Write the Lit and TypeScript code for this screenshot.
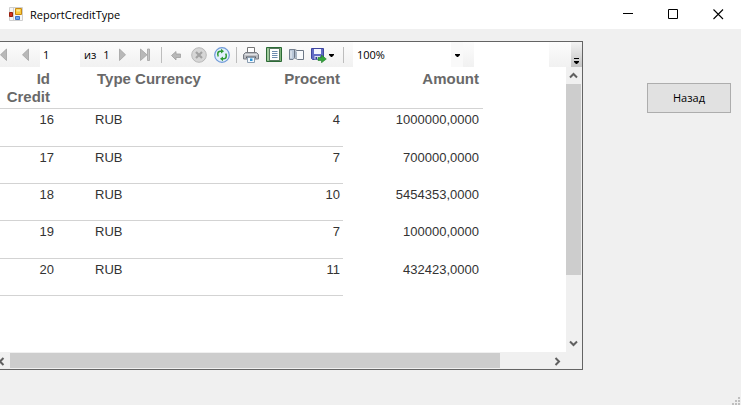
import { LitElement, html, css, svg } from "lit";
import { customElement, state } from "lit/decorators.js";

interface CreditRow {
  id: number;
  currency: string;
  procent: number;
  amount: string;
}

const rows: CreditRow[] = [
  { id: 16, currency: "RUB", procent: 4, amount: "1000000,0000" },
  { id: 17, currency: "RUB", procent: 7, amount: "700000,0000" },
  { id: 18, currency: "RUB", procent: 10, amount: "5454353,0000" },
  { id: 19, currency: "RUB", procent: 7, amount: "100000,0000" },
  { id: 20, currency: "RUB", procent: 11, amount: "432423,0000" },
];

const icon = (body: unknown, width = 16) =>
  html`<svg width=${width} height="16" viewBox="0 0 ${width} 16" aria-hidden="true">${body}</svg>`;

const greyFill = "#b8b8b8";
const greyEdge = "#a2a2a2";

const icons = {
  first: svg`<path d="M12.5 2v11.500L6.500 7.800z" fill=${greyFill} stroke=${greyEdge} stroke-width=".8"/><path d="M3 2h3v12H3z" fill=${greyFill}/>`,
  prev: svg`<path d="M11.5 2v11.500L5.500 7.800z" fill=${greyFill} stroke=${greyEdge} stroke-width=".8"/>`,
  next: svg`<path d="M3.500 2v11.500L9.500 7.800z" fill=${greyFill} stroke=${greyEdge} stroke-width=".8"/>`,
  last: svg`<path d="M1.500 2v11.500L8 7.800z" fill=${greyFill} stroke=${greyEdge} stroke-width=".8"/><path d="M8.500 2h2v11.500h-2z" fill="#c4c4c4" stroke=${greyEdge} stroke-width=".8"/>`,
  back: svg`<path d="M3.500 8.500 8 4.500v2.500h4.500v3.500H8v2.500z" fill="#b8b8b8" stroke="#a0a0a0" stroke-width=".8"/>`,
  stop: svg`<circle cx="8" cy="8" r="7.300" fill="#d6d6d6" stroke="#b8b8b8"/><path d="m5 5 6 6m0-6-6 6" stroke="#a2a2a2" stroke-width="2.200"/>`,
  refresh: svg`<circle cx="8" cy="8" r="7.300" fill="#e2effc" stroke="#6f9ad8" stroke-width="1.200"/><path d="M3.800 8.500V6.500q0-2.300 2.700-2.300h1" fill="none" stroke="#2d9a35" stroke-width="1.500"/><path d="M7 1.800v4.800l3-2.400z" fill="#2d9a35"/><path d="M3 8h2v1.500H3zM11 6.500h2V8h-2z" fill="#63b866"/><path d="M12.200 7.500v2q0 2.300-2.700 2.300h-1" fill="none" stroke="#2d9a35" stroke-width="1.500"/><path d="M9 9.400v4.800l-3-2.400z" fill="#2d9a35"/>`,
  print: svg`<path d="M4.500.500h7v6h-7z" fill="#fff" stroke="#777"/><path d="M2.500 5.500h11l2 2v4.500H.500V7.500z" fill="#b9bcc1" stroke="#777b82"/><path d="M2 7h12v1.200H2z" fill="#e0e2e5"/><path d="M3 9.500h10V11H3z" fill="#5a5e64"/><path d="M4.500 10.500h7v5h-7z" fill="#f4faff" stroke="#8b9db0"/><path d="M7 11.500h2.500V14H7z" fill="#2a94d8"/>`,
  layout: svg`<path d="M.500.500h15v14H.500z" fill="#7fb47c" stroke="#2c6a36"/><path d="M2 1.500v12" stroke="#c3e2be"/><path d="M3.500 1.500h10v12h-10z" fill="#fff" stroke="#3b6145" stroke-width=".8"/><path d="M6 4.500h5.500M6 6.500h5.500M6 8.500h5.500M6 10.500h5.500" stroke="#6c8bb0"/>`,
  setup: svg`<path d="M.500 2.500h5v8.500l-1.500 1.500H.500z" fill="#b9c7d8" stroke="#74808f"/><path d="M2 4v7" stroke="#eef3f8"/><path d="M5.500 2.500 8 3.500h6.500v9H8.500l-3-2z" fill="#f8fafc" stroke="#6c7785"/><path d="M6 3.200 8 5v6.500L6 10.200z" fill="#a8b5c4"/>`,
  save: svg`<path d="M.500 1.500h12v11h-11l-1-1z" fill="#626bc6" stroke="#3d449f"/><path d="M3 2h7v5H3z" fill="#f3f5ff"/><path d="M3.500 9H9v3.500H3.500z" fill="#d9def2"/><path d="M4.500 10H6v2.500H4.500z" fill="#343a93"/><path d="M7 10.500h3.500V8l4.800 4-4.800 3.800V13.500H7z" fill="#35a53a" stroke="#1c7a28" stroke-width=".6"/>`,
};

@customElement("report-toolbar")
export class ReportToolbar extends LitElement {
  static styles = css`
    :host {
      display: flex;
      align-items: center;
      height: 25px;
      overflow: hidden;
      background: linear-gradient(#fcfcfc, #f1f1f1);
      font: 11px/16px "Open Sans", "Noto Sans", sans-serif;
      color: #000;
    }
    button {
      display: flex;
      flex: none;
      align-items: center;
      justify-content: center;
      width: 23px;
      height: 23px;
      padding: 0;
      border: 0;
      background: none;
    }
    .first {
      margin-left: -10px;
    }
    .save {
      width: 32px;
      gap: 2px;
      justify-content: flex-start;
      padding-left: 3px;
    }
    svg {
      flex: none;
    }
    input,
    select {
      box-sizing: border-box;
      height: 25px;
      border: 0;
      padding: 0 4px;
      margin: 0;
      background: #fff;
      color: inherit;
      font: inherit;
      border-radius: 0;
      appearance: none;
    }
    .page {
      width: 40px;
      margin-left: 4px;
      padding: 0 3px;
    }
    .total {
      display: flex;
      flex: none;
      box-sizing: border-box;
      width: 32px;
      padding-left: 4px;
      gap: 7px;
    }
    .sep {
      flex: none;
      width: 1px;
      height: 16px;
      margin: 0 2px 0 3px;
      background: #bdbdbd;
    }
    .zoom {
      display: grid;
      flex: none;
      grid-template-columns: 98px 12px;
      align-items: center;
      margin: 0 11px 0 7px;
    }
    .zoom select {
      grid-area: 1 / 1 / 2 / 3;
      width: 100%;
      background: linear-gradient(90deg, #fff 98px, #f9f9f9 98px);
    }
    .zoom svg {
      grid-area: 1 / 2;
      justify-self: center;
      pointer-events: none;
    }
    .find {
      width: 75px;
    }
    .more {
      align-items: flex-end;
      width: 11px;
      height: 25px;
      margin-left: auto;
      padding-bottom: 2px;
      background: linear-gradient(#f3f3f3, #c4c4c4);
    }
  `;

  render() {
    return html`
      <button class="first" aria-label="First page">${icon(icons.first)}</button>
      <button aria-label="Previous page">${icon(icons.prev)}</button>
      <input class="page" aria-label="Page" value="1" />
      <span class="total"><span>из</span><span>1</span></span>
      <button aria-label="Next page">${icon(icons.next)}</button>
      <button aria-label="Last page">${icon(icons.last)}</button>
      <span class="sep"></span>
      <button aria-label="Back">${icon(icons.back)}</button>
      <button aria-label="Stop">${icon(icons.stop)}</button>
      <button aria-label="Refresh">${icon(icons.refresh)}</button>
      <span class="sep"></span>
      <button aria-label="Print">${icon(icons.print)}</button>
      <button aria-label="Print layout">${icon(icons.layout)}</button>
      <button aria-label="Page setup">${icon(icons.setup)}</button>
      <button class="save" aria-label="Export">
        ${icon(icons.save)}${icon(svg`<path d="M0 7h5v1L3 10H2L0 8z"/>`, 5)}
      </button>
      <span class="sep"></span>
      <span class="zoom">
        <select aria-label="Zoom"><option>100%</option></select>
        ${icon(svg`<path d="M0 7h5v1L3 10H2L0 8z"/>`, 5)}
      </span>
      <input class="find" aria-label="Find text" />
      <button class="more" aria-label="More">
        <svg width="6" height="8" viewBox="0 0 6 8" aria-hidden="true">
          <path d="M0 1h5v1H0zM0 4h5v1L3 7H2L0 5z" />
        </svg>
      </button>
    `;
  }
}

@customElement("report-table")
export class ReportTable extends LitElement {
  static styles = css`
    :host {
      display: block;
      overflow: hidden;
      background: #fff;
      font: 13px/18px "Liberation Sans", Arial, sans-serif;
      color: #333;
    }
    table {
      table-layout: fixed;
      width: 483px;
      border-spacing: 0;
    }
    .c-id {
      width: 58px;
    }
    .c-type {
      width: 147px;
    }
    .c-procent {
      width: 138px;
    }
    .c-amount {
      width: 140px;
    }
    th,
    td {
      box-sizing: border-box;
      vertical-align: top;
      text-align: right;
      border-bottom: 1px solid #d3d3d3;
    }
    th {
      height: 42px;
      padding: 3px 4px 0 0;
      color: #696969;
      font-size: 15px;
    }
    th.id {
      padding-right: 8px;
    }
    th.type {
      padding: 3px 0 0 39px;
      text-align: left;
    }
    td {
      height: 37px;
      padding: 2px 4px 0 0;
    }
    tr:nth-child(3n + 1) td {
      height: 38px;
    }
    td.type {
      padding-left: 37px;
      text-align: left;
    }
    .procent {
      padding-right: 3px;
    }
    td.amount {
      border-bottom: 0;
    }
  `;

  render() {
    return html`
      <table>
        <colgroup>
          <col class="c-id" /><col class="c-type" /><col class="c-procent" /><col class="c-amount" />
        </colgroup>
        <thead>
          <tr>
            <th class="id">Id Credit</th>
            <th class="type">Type Currency</th>
            <th class="procent">Procent</th>
            <th>Amount</th>
          </tr>
        </thead>
        <tbody>
          ${rows.map(
            (r) => html`<tr>
              <td>${r.id}</td>
              <td class="type">${r.currency}</td>
              <td class="procent">${r.procent}</td>
              <td class="amount">${r.amount}</td>
            </tr>`,
          )}
        </tbody>
      </table>
    `;
  }
}

@customElement("app-root")
export class AppRoot extends LitElement {
  @state() private heading = "ReportCreditType";

  static styles = css`
    :host {
      display: flex;
      flex-direction: column;
      min-height: 100vh;
      background: #f0f0f0;
      color: #000;
      font: 11px/16px "Open Sans", "Noto Sans", sans-serif;
    }
    button {
      display: flex;
      align-items: center;
      justify-content: center;
      padding: 0;
      border: 0;
      background: none;
      color: inherit;
      font: inherit;
    }
    .titlebar {
      display: flex;
      align-items: center;
      height: 29px;
      padding-left: 8px;
      background: #fff;
    }
    .titlebar svg {
      flex: none;
    }
    h1 {
      flex: 1;
      margin: 0 0 0 6px;
      font: inherit;
    }
    .caption {
      width: 45px;
      height: 29px;
    }
    .body {
      display: flex;
      flex: 1;
      padding-top: 12px;
    }
    .viewer {
      display: grid;
      flex: 1;
      min-width: 0;
      grid-template: auto 1fr 17px / minmax(0, 1fr) 16px;
      margin-bottom: 35px;
      border: 1px solid #646464;
      border-left: 0;
    }
    report-toolbar {
      grid-column: 1 / 3;
    }
    .vbar {
      display: flex;
      flex-direction: column;
    }
    .hbar {
      display: flex;
      align-self: end;
      height: 16px;
    }
    .track {
      flex: 1;
    }
    .thumb {
      background: #cdcdcd;
    }
    .vbar .thumb {
      width: 15px;
      height: 76%;
    }
    .hbar .thumb {
      width: 91%;
      height: 15px;
    }
    .arrow {
      flex: none;
      width: 17px;
      height: 16px;
    }
    .vbar .arrow {
      width: 15px;
      height: 17px;
    }
    .arrow.left {
      width: 10px;
      justify-content: flex-start;
    }
    .side {
      display: flex;
      flex-direction: column;
      justify-content: space-between;
      width: 158px;
    }
    .action {
      box-sizing: border-box;
      height: 30px;
      margin: 42px 10px 0 64px;
      border: 1px solid #adadad;
      background: #e1e1e1;
    }
    .grip {
      align-self: flex-end;
    }
  `;

  private chevron(d: string) {
    return html`<svg width="9" height="9" viewBox="0 0 9 9" aria-hidden="true">
      <path d=${d} fill="none" stroke="#606060" stroke-width="2" />
    </svg>`;
  }

  render() {
    return html`
      <header class="titlebar">
        <svg width="16" height="16" viewBox="0 0 16 16" aria-hidden="true">
          <path d="M1.500.500h13v13h-13z" fill="#f6f6f6" stroke="#cfcfcf" />
          <path d="M1 9.500h5M5.500 1v12" stroke="#cfcfcf" />
          <path d="M7.500 1.500h6v6h-6z" fill="#f9c93c" stroke="#c88a12" />
          <path d="M8.500 2.500h3.500v2H8.500z" fill="#fde99a" />
          <path d="M1.500 5.500h3v4h-3z" fill="#d3351f" stroke="#98200f" />
          <path d="M7.500 9.500h4v3h-4z" fill="#6ba3ee" stroke="#3d74cc" />
        </svg>
        <h1>${this.heading}</h1>
        <button class="caption" aria-label="Minimize">
          <svg width="11" height="11" viewBox="0 0 11 11"><path d="M0 4.500h10" stroke="#000" /></svg>
        </button>
        <button class="caption" aria-label="Maximize">
          <svg width="11" height="11" viewBox="0 0 11 11"><path d="M.5 .5h9v9h-9z" fill="none" stroke="#000" /></svg>
        </button>
        <button class="caption" aria-label="Close">
          <svg width="11" height="11" viewBox="0 0 11 11"><path d="m.5 .5 9.500 9.500m0-9.500-9.500 9.500" stroke="#000" stroke-width="1.100" /></svg>
        </button>
      </header>
      <main class="body">
        <section class="viewer">
          <report-toolbar></report-toolbar>
          <report-table></report-table>
          <div class="vbar">
            <button class="arrow" aria-label="Scroll up">${this.chevron("M1 6.500 4.500 3 8 6.500")}</button>
            <div class="track"><div class="thumb"></div></div>
            <button class="arrow" aria-label="Scroll down">${this.chevron("M1 2.500 4.500 6 8 2.500")}</button>
          </div>
          <div class="hbar">
            <button class="arrow left" aria-label="Scroll left">${this.chevron("M3.500 1 0 4.500 3.500 8")}</button>
            <div class="track"><div class="thumb"></div></div>
            <button class="arrow" aria-label="Scroll right">${this.chevron("M2.500 1 6 4.500 2.500 8")}</button>
          </div>
        </section>
        <aside class="side">
          <button class="action">Назад</button>
          <svg class="grip" width="10" height="9" viewBox="0 0 10 9" aria-hidden="true">
            <path d="M7 1h2v2H7zM4 4h2v2H4zM7 4h2v2H7zM1 7h2v2H1zM4 7h2v2H4zM7 7h2v2H7z" fill="#bfbfbf" />
          </svg>
        </aside>
      </main>
    `;
  }
}
